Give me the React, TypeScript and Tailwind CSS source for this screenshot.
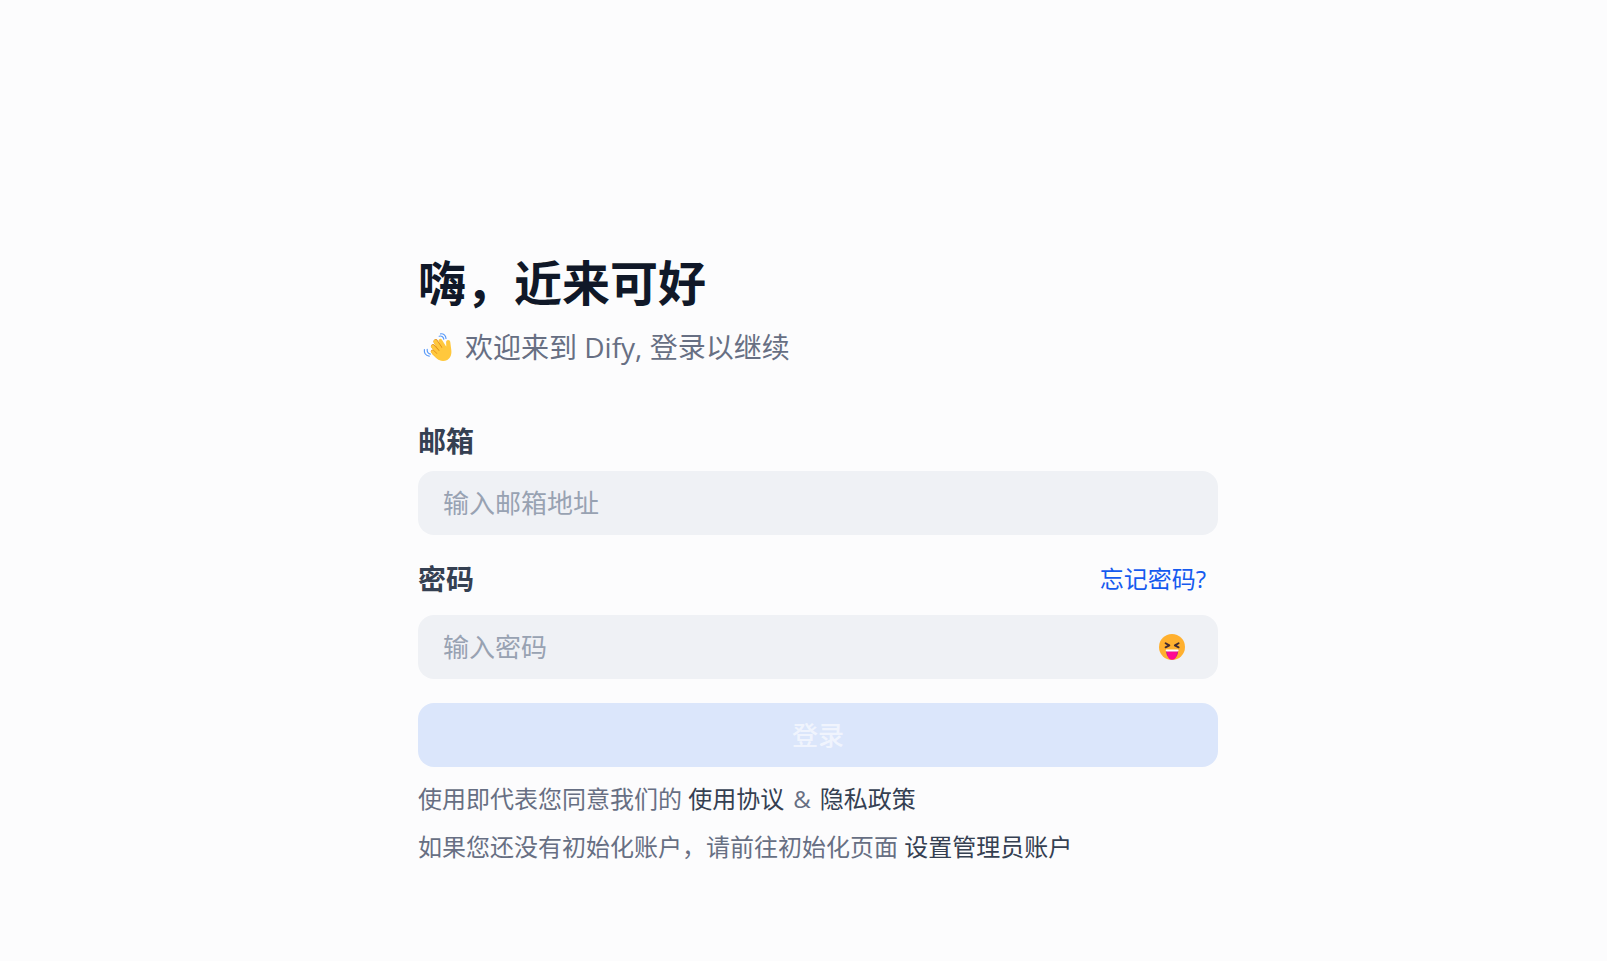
import { useState } from "react"

function WaveIcon() {
  return (
    <svg viewBox="0 0 38 36" className="h-9 w-[38px] shrink-0" aria-hidden="true">
      <g fill="none" stroke="#5B9BF8" strokeWidth="1.2" strokeLinecap="round">
        <path d="M21.2 7.2c2.200-.7 4.200.6 4.600 3" />
        <path d="M22.600 4.800c3-.4 5.200 1.600 5.400 4.700" />
        <path d="M9.200 20.400c-.2 2.400 1 4.200 3.200 4.700" />
        <path d="M6.400 20.600c-.4 3.400 1.600 6 4.800 6.500" />
      </g>
      {/* palm and thumb */}
      <path
        fill="#FFC83D"
        d="M20 13l8.300 4.800-.2-4.200c0-1.600.7-2.600 2-2.700 1.300 0 2 .9 2.200 2.300l.9 7c.7 4.600-.2 8.500-3.900 10.700-4.100 2.300-8.400.9-11.700-2.300L14 25z"
      />
      {/* fingers, each with a shaded edge under the next */}
      <g fill="none" strokeLinecap="round">
        <path d="M22.300 11.800l5 8" stroke="#FFC83D" strokeWidth="3.800" />
        <path d="M17.700 12.400l6.300 9.600" stroke="#E08F1D" strokeWidth="4.600" />
        <path d="M17.400 12.700l6.600 10" stroke="#FFC83D" strokeWidth="3.800" />
        <path d="M15 17.200l6.400 7.200" stroke="#E08F1D" strokeWidth="4.200" />
        <path d="M14.800 17.600l6.600 7.600" stroke="#FFC83D" strokeWidth="3.400" />
        <path d="M14.600 22.500l4.800 4.300" stroke="#E08F1D" strokeWidth="3.600" />
        <path d="M14.500 22.900l4.900 4.500" stroke="#FFC83D" strokeWidth="2.900" />
      </g>
      <path fill="#FFC83D" d="M24 18.500l5-1 2.500 6.500-4 6-7 .5-3.500-3 3-4z" />
    </svg>
  )
}

function LaughingIcon() {
  return (
    <svg viewBox="0 0 26 26" className="size-[26px]" aria-hidden="true">
      <circle cx="13" cy="13" r="13" fill="#FFB02E" />
      <g fill="none" stroke="#402A32" strokeWidth="1.9" strokeLinecap="round" strokeLinejoin="round">
        <path d="M6.600 9.200l3.700 2.200-3.700 1.900" />
        <path d="M19.600 9.200l-3.700 2.200 3.700 1.900" />
      </g>
      <path fill="#BB1D80" d="M7 16h12.200c0 4.800-2.100 8.900-6.100 8.900S7 20.800 7 16z" />
      <path fill="#FF0A93" d="M7.900 17.500h10.400l-.9 4.200c-.5 2.400-2 4-4.300 4s-3.800-1.600-4.300-4z" />
      <path fill="#fff" d="M7.400 15.500h11.500c.5 0 .8.300.7.800l-.1.500c-.1.500-.4.700-.9.700H7.700c-.5 0-.8-.2-.9-.7l-.1-.5c-.1-.5.200-.8.700-.8z" />
    </svg>
  )
}

export default function App() {
  const [email, setEmail] = useState("")
  const [password, setPassword] = useState("")
  const [showPassword, setShowPassword] = useState(false)

  return (
    <main className="min-h-screen bg-[#fcfcfd] pt-[255px] pb-20 pl-[29px] font-['Open_Sans','Noto_Sans_CJK_SC',sans-serif] text-[#676f83]">
      <div className="mx-auto w-full max-w-[800px]">
        <h1 className="text-5xl leading-[56px] font-bold text-[#101828]">嗨，近来可好</h1>
        <div className="mt-4 flex items-center gap-[9px] text-[28px] leading-10">
          <WaveIcon />
          <p>欢迎来到 Dify, 登录以继续</p>
        </div>

        <form className="mt-[54px]" onSubmit={(e) => e.preventDefault()}>
          <label htmlFor="email" className="mb-[10px] block text-[28px] leading-10 font-bold text-[#354052]">
            邮箱
          </label>
          <input
            id="email"
            type="email"
            value={email}
            onChange={(e) => setEmail(e.target.value)}
            placeholder="输入邮箱地址"
            className="block h-16 w-full rounded-2xl bg-[#eff1f5] px-[25px] text-[26px] text-[#101828] outline-none placeholder:text-[#98a2b2]"
          />

          <div className="mt-6 mb-4 flex items-center justify-between pr-3">
            <label htmlFor="password" className="text-[28px] leading-10 font-bold text-[#354052]">
              密码
            </label>
            <a href="#" className="text-2xl text-[#155aef]">
              忘记密码?
            </a>
          </div>
          <div className="flex h-16 items-center rounded-2xl bg-[#eff1f5] pr-[33px]">
            <input
              id="password"
              type={showPassword ? "text" : "password"}
              value={password}
              onChange={(e) => setPassword(e.target.value)}
              placeholder="输入密码"
              className="h-full min-w-0 flex-1 bg-transparent px-[25px] text-[26px] text-[#101828] outline-none placeholder:text-[#98a2b2]"
            />
            <button type="button" aria-label="显示密码" onClick={() => setShowPassword(!showPassword)}>
              <LaughingIcon />
            </button>
          </div>

          <button
            type="submit"
            disabled={!email || !password}
            className="mt-6 flex h-16 w-full items-center justify-center rounded-2xl bg-[#155aef] text-[26px] font-medium text-white disabled:bg-[#dbe6fb] disabled:text-white/60"
          >
            登录
          </button>
        </form>

        <div className="mt-[14px] space-y-3 text-2xl leading-9">
          <p>
            使用即代表您同意我们的{" "}
            <a href="#" className="text-[#354052]">使用协议</a>
            <span className="mx-[9px]">&amp;</span>
            <a href="#" className="text-[#354052]">隐私政策</a>
          </p>
          <p>
            如果您还没有初始化账户，请前往初始化页面{" "}
            <a href="#" className="text-[#354052]">设置管理员账户</a>
          </p>
        </div>
      </div>
    </main>
  )
}
